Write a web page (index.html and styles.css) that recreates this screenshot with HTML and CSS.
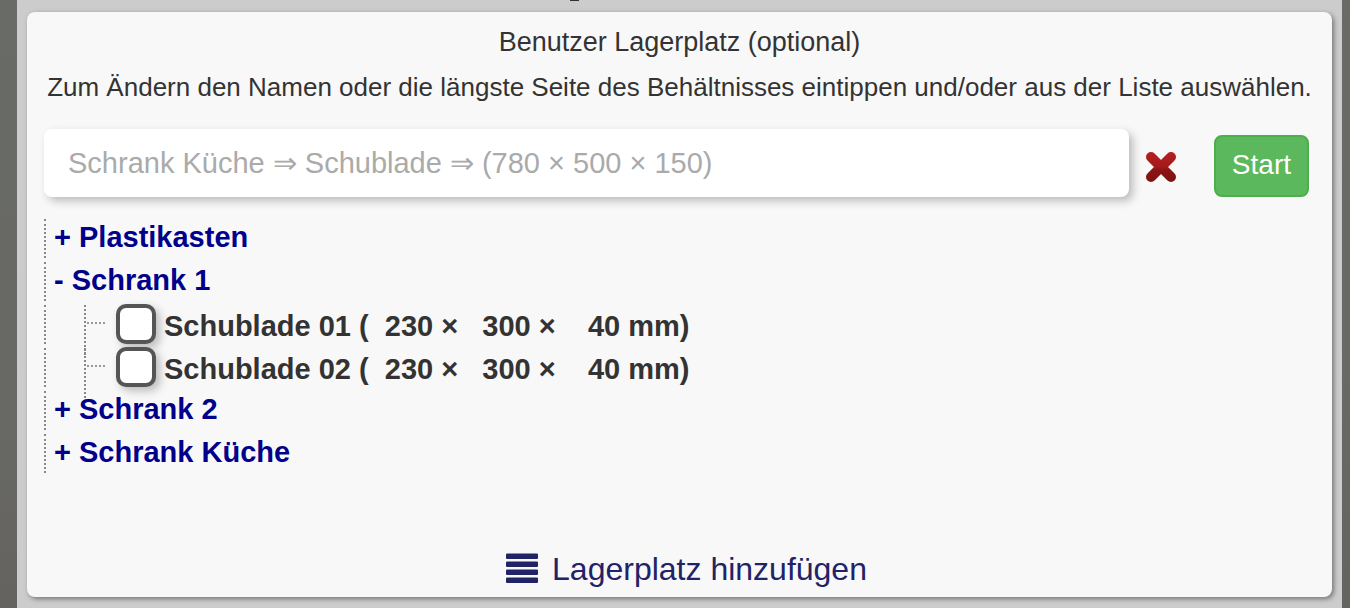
FILE: index.html
```html
<!DOCTYPE html>
<html lang="de">
<head>
    <meta charset="UTF-8">
    <meta name="viewport" content="width=device-width, initial-scale=1.0">
    <title>Benutzer Lagerplatz</title>
    <link rel="stylesheet" href="styles.css">
</head>
<body>
    <main class="page">
        <form class="panel">
            <label class="title" for="lagerplatz">Benutzer Lagerplatz (optional)</label>
            <p class="hint">Zum Ändern den Namen oder die längste Seite des Behältnisses eintippen und/oder aus der Liste auswählen.</p>

            <div class="search">
                <input type="text" id="lagerplatz" class="search-input" placeholder="Schrank Küche ⇒ Schublade ⇒ (780 × 500 × 150)">
                <button type="button" class="clear" aria-label="Eingabe löschen">
                    <svg width="32" height="32" viewBox="0 0 32 32">
                        <defs>
                            <linearGradient id="red" gradientUnits="userSpaceOnUse" x1="0" y1="0" x2="0" y2="32">
                                <stop offset="0" stop-color="#b82020"/>
                                <stop offset="0.5" stop-color="#a31a1a"/>
                                <stop offset="0.6" stop-color="#8a1414"/>
                                <stop offset="1" stop-color="#7c1212"/>
                            </linearGradient>
                        </defs>
                        <path fill="none" stroke="url(#red)" stroke-width="10" stroke-linecap="round" d="M6 6L26 26M26 6L6 26"/>
                    </svg>
                </button>
                <button type="submit" class="start">Start</button>
            </div>

            <ul class="tree">
                <li><button type="button" class="node">+ Plastikasten</button></li>
                <li><button type="button" class="node">- Schrank 1</button></li>
                <li class="child">
                    <input type="checkbox" id="s01" class="check">
                    <label for="s01">Schublade 01 (&nbsp; 230 × &nbsp; 300 × &nbsp; &nbsp;40 mm)</label>
                </li>
                <li class="child">
                    <input type="checkbox" id="s02" class="check">
                    <label for="s02">Schublade 02 (&nbsp; 230 × &nbsp; 300 × &nbsp; &nbsp;40 mm)</label>
                </li>
                <li><button type="button" class="node">+ Schrank 2</button></li>
                <li><button type="button" class="node">+ Schrank Küche</button></li>
            </ul>

            <a class="add" href="#">
                <svg width="32" height="32" viewBox="0 0 32 32" fill="#222266">
                    <rect x="0" y="0.500" width="32" height="5.500" rx="1"/>
                    <rect x="0" y="8.500" width="32" height="5.500" rx="1"/>
                    <rect x="0" y="16.500" width="32" height="5.500" rx="1"/>
                    <rect x="0" y="24.500" width="32" height="5.500" rx="1"/>
                </svg>
                <span>Lagerplatz hinzufügen</span>
            </a>
        </form>
    </main>
</body>
</html>
```

FILE: styles.css
```css
* {
    box-sizing: border-box;
}
body {
    margin: 0;
    padding: 0 8px 0 17px;
    background: linear-gradient(#696b67, #686965 60%, #656360);
    font-family: "Liberation Sans", Arial, sans-serif;
    color: #333;
}
.page {
    position: relative;
    min-height: 100vh;
    padding: 12px 10px 11px;
    background-color: #ccc;
}
/* end of the heading above the panel */
.page::before {
    content: "";
    position: absolute;
    top: 0;
    left: 553px;
    width: 9px;
    height: 1px;
    background-color: #333;
}
.panel {
    display: flex;
    flex-direction: column;
    padding: 14px 17px 8px;
    background-color: #f8f8f8;
    border-radius: 8px;
    box-shadow: 2px 2px 5px #777;
}
.title {
    font-size: 27px;
    line-height: 32px;
    text-align: center;
}
.hint {
    margin: 13px 0 26px;
    font-size: 26px;
    line-height: 32px;
    text-align: center;
}

.search {
    display: flex;
    align-items: flex-end;
    padding-right: 6px;
}
.search-input {
    flex: 1;
    min-width: 0;
    height: 68px;
    padding: 0 24px;
    border: none;
    border-radius: 8px;
    background-color: #fff;
    box-shadow: 4px 4px 8px #bbb;
    font-family: inherit;
    font-size: 29px;
}
.search-input::placeholder {
    color: #aaa;
    opacity: 1;
}
.clear {
    display: flex;
    margin: 0 37px 14px 16px;
    padding: 0;
    border: none;
    background: none;
    cursor: pointer;
}
.start {
    height: 62px;
    padding: 0 16px 2px;
    border: 2px solid #4cae4c;
    border-radius: 8px;
    background-color: #5cb85c;
    color: #fff;
    font-family: inherit;
    font-size: 28px;
    cursor: pointer;
}

.tree {
    display: flex;
    flex-direction: column;
    gap: 4px;
    margin: 22px 0 76px;
    padding: 0;
    list-style: none;
    font-size: 29px;
    font-weight: bold;
}
.tree li {
    display: flex;
    align-items: center;
    height: 39px;
    padding-left: 8px;
    border-left: 2px dotted #888;
}
.node {
    padding: 0 0 2px;
    border: none;
    background: none;
    color: #00008b;
    font: inherit;
    cursor: pointer;
}
.tree .child {
    position: relative;
    gap: 8px;
    padding-left: 70px;
}
.child::before {
    content: "";
    position: absolute;
    top: 0;
    left: 38px;
    height: 50px;
    border-left: 2px dotted #888;
}
.child::after {
    content: "";
    position: absolute;
    top: 17px;
    left: 41px;
    width: 18px;
    border-top: 2px dotted #999;
}
.child label {
    padding-top: 4px;
}
.check {
    appearance: none;
    flex: none;
    width: 40px;
    height: 40px;
    margin: 0 0 2px;
    border: 4px solid #555;
    border-radius: 10px;
    background-color: #fff;
    box-shadow: 4px 4px 8px #bbb;
}

.add {
    display: flex;
    justify-content: center;
    align-items: center;
    gap: 14px;
    padding-left: 14px;
    color: #222266;
    font-size: 32px;
    line-height: 40px;
    text-decoration: none;
}
```
